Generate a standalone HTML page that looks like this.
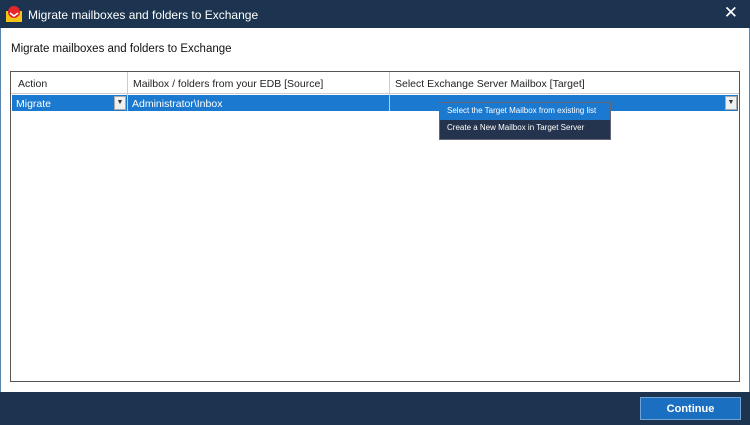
<!DOCTYPE html>
<html><head><style>
body{margin:0;width:750px;height:425px;overflow:hidden;font-family:"Liberation Sans",sans-serif;background:#fff;position:relative}
.tb{position:absolute;left:0;top:0;width:750px;height:28px;background:#1c344f;color:#fff;font-size:12px}
.tb .t{position:absolute;left:28px;top:8px}
.x{position:absolute;right:12px;top:3px;font-size:17px}
.side{position:absolute;top:28px;width:1px;height:364px;background:#5b86b0}
h1{position:absolute;left:11px;top:43px;margin:0;font-size:11.5px;font-weight:normal;color:#111}
.tbl{position:absolute;left:10px;top:71px;width:728px;height:309px;border:1px solid #555;background:#fff}
.hd{position:absolute;top:0;height:21px;border-bottom:1px solid #ccc;width:100%;font-size:10.5px;color:#222}
.hd span{position:absolute;top:6px}
.vl{position:absolute;top:0;width:1px;height:39px;background:#ccc}
.row{position:absolute;left:1px;top:23px;width:726px;height:16px;background:#1b79d0;color:#fff;font-size:10.5px}
.row span{position:absolute;top:3px}
.dd{position:absolute;width:10px;height:12px;background:#f0f0f0;border:1px solid #aaa;top:1px;font-size:7px;color:#333;text-align:center;line-height:12px}
.menu{position:absolute;left:439px;top:102px;width:170px;height:36px;background:#24344e;border:1px solid #667;font-size:8px;color:#fff}
.menu div{height:17px;line-height:16px;padding-left:7px}
.ft{position:absolute;left:0;top:392px;width:750px;height:33px;background:#1c344f}
.btn{position:absolute;left:640px;top:397px;width:99px;height:21px;background:#1b6fc0;border:1px solid #6fa3d6;color:#fff;font-size:11px;font-weight:bold;text-align:center;line-height:22px}
</style></head><body>
<div class="tb"><svg style="position:absolute;left:5px;top:5px" width="18" height="18" viewBox="0 0 18 18"><rect x="1" y="6" width="16" height="11" fill="#f5c518"/><circle cx="9" cy="7" r="6" fill="#e5262a"/><path d="M5 8l4 3 4-3" stroke="#fff" stroke-width="1.5" fill="none"/></svg><span class="t">Migrate mailboxes and folders to Exchange</span><span class="x">✕</span></div>
<div class="side" style="left:0"></div><div class="side" style="left:749px"></div>
<h1>Migrate mailboxes and folders to Exchange</h1>
<div class="tbl">
<div class="hd"><span style="left:7px">Action</span><span style="left:122px">Mailbox / folders from your EDB [Source]</span><span style="left:384px">Select Exchange Server Mailbox [Target]</span></div>
<div class="row"><span style="left:4px">Migrate</span><div class="dd" style="left:102px">▼</div><span style="left:120px">Administrator\Inbox</span><div class="dd" style="left:713px">▼</div></div>
<div class="vl" style="left:116px"></div><div class="vl" style="left:378px"></div>
</div>
<div class="menu"><div style="background:#1b79d0">Select the Target Mailbox from existing list</div><div>Create a New Mailbox in Target Server</div></div>
<div class="ft"></div>
<div class="btn">Continue</div>
</body></html>
